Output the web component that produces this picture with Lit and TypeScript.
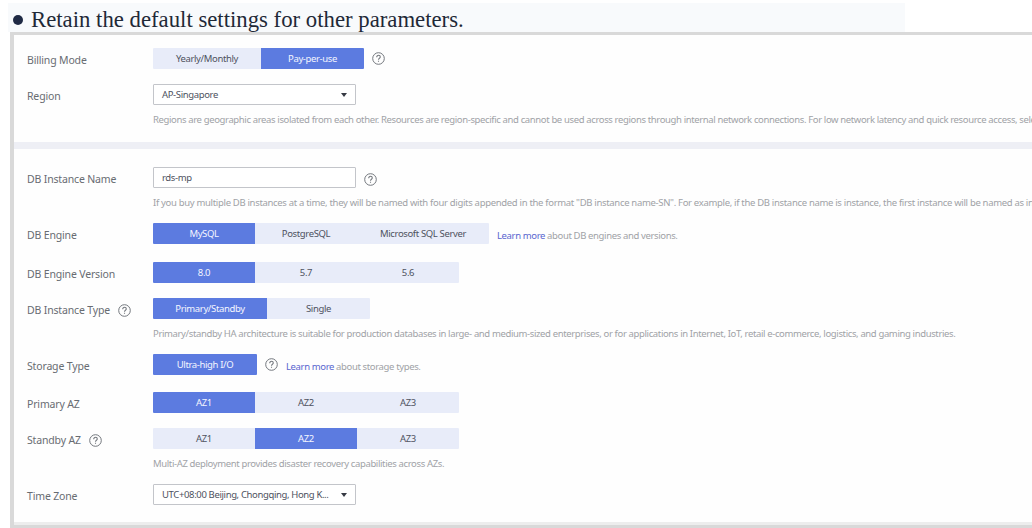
import { LitElement, html, css } from "lit";
import { customElement, property } from "lit/decorators.js";

@customElement("help-icon")
class HelpIcon extends LitElement {
  static styles = css`
    :host { display: block; width: 13px; height: 13px; flex: none; }
    svg { display: block; }
  `;
  render() {
    return html`<svg width="13" height="13" viewBox="0 0 13 13" fill="none" stroke="#73777d">
      <circle cx="6.5" cy="6.5" r="5.8" stroke-width="1"></circle>
      <path d="M4.7 5.2C4.7 4 5.5 3.3 6.5 3.3S8.3 4 8.3 5C8.3 6.3 6.5 6.2 6.5 7.7M6.5 8.8V9.8" stroke-width="1.1"></path>
    </svg>`;
  }
}

interface Option { text: string; width: number; }

@customElement("option-group")
class OptionGroup extends LitElement {
  @property({ attribute: false }) options: Option[] = [];
  @property({ type: Number }) selected = 0;
  static styles = css`
    :host { display: flex; height: 21px; border-radius: 1px; overflow: hidden; flex: none; }
    .option { background: #e8ecf9; color: #4e5260; display: flex; align-items: center; justify-content: center; line-height: 21px; white-space: nowrap; }
    .on { background: #5c7be0; color: #f4f6ff; }
  `;
  render() {
    return this.options.map((o, i) => html`<div class="option ${i === this.selected ? "on" : ""}" style="width:${o.width}px"><span>${o.text}</span></div>`);
  }
}

@customElement("app-root")
class AppRoot extends LitElement {
  static styles = css`
    :host { display: block; width: 1032px; height: 528px; overflow: hidden; background: #fff; font-family: "Noto Sans", sans-serif; font-size: 9.5px; letter-spacing: -0.365px; color: #4e5260; box-sizing: border-box; padding-top: 3px; }
    .heading { margin-left: 8px; width: 897px; height: 29px; background: #f8fafc; color: #1f2937; font: 22.75px/33px "Liberation Serif", serif; letter-spacing: 0; display: flex; align-items: center; box-sizing: border-box; padding: 4px 0 0 5px; }
    .bullet { width: 10px; height: 10px; border-radius: 50%; background: #1f2a44; margin-right: 8px; margin-top: 1px; }
    .panel { margin-left: 10px; height: 496px; box-sizing: border-box; border: 4px solid #d9d9d9; border-right: 0; border-top-width: 3px; border-bottom-width: 3px; background: #fefefe; display: flex; flex-direction: column; }
    .section { padding: 13px 0 0 13px; box-sizing: border-box; }
    .first { padding-top: 13px; height: 107px; }
    .second { padding-top: 18px; height: 373px; }
    .divider { height: 7px; background: #eeeff5; flex: none; }
    .base { height: 3px; background: #ededed; flex: none; }
    .row { display: grid; grid-template-columns: 126px 1fr; height: 21px; margin-bottom: 15px; }
    .label { display: flex; align-items: center; gap: 8px; font-size: 10.5px; letter-spacing: -0.16px; line-height: 22px; padding-top: 3px; color: #686c72; white-space: nowrap; }
    .control { display: flex; align-items: center; gap: 8px; white-space: nowrap; }
    .box { width: 203px; height: 21px; box-sizing: border-box; border: 1px solid #c3c5ca; border-radius: 1px; display: flex; align-items: center; justify-content: space-between; padding: 0 8px; background: #fff; }
    .hint { margin: -6px 0 11px 126px; height: 15px; line-height: 15px; white-space: nowrap; }
    .naming { letter-spacing: -0.315px; }
    .hint, .note { color: #a0a2a6; }
    .note { padding-top: 3px; }
    .link { color: #5965cf; }
    .arrow { width: 0; height: 0; border: 3px solid transparent; border-top: 4px solid #363a44; border-bottom: 0; margin-top: 1px; }
    .first { padding-top: 11px; }
    .second { padding-top: 16px; }
    .engine { margin-bottom: 18px; }
    .storage { margin-bottom: 17px; }
    .name help-icon { margin-top: 3px; }
  `;
  private row(label: string, control: unknown, help = false, variant = "") {
    return html`<div class="row ${variant}"><div class="label"><span>${label}</span>${help ? html`<help-icon></help-icon>` : ""}</div><div class="control">${control}</div></div>`;
  }
  private group(names: string[], widths: number[], selected = 0) {
    return html`<option-group .options=${names.map((text, i) => ({ text, width: widths[i] }))} .selected=${selected}></option-group>`;
  }
  render() {
    return html`
      <div class="heading"><div class="bullet"></div><span>Retain the default settings for other parameters.</span></div>
      <div class="panel">
        <div class="section first">
          ${this.row("Billing Mode", html`${this.group(["Yearly/Monthly", "Pay-per-use"], [108, 103], 1)}<help-icon></help-icon>`)}
          ${this.row("Region", html`<div class="box"><span>AP-Singapore</span><i class="arrow"></i></div>`)}
          <div class="hint">Regions are geographic areas isolated from each other. Resources are region-specific and cannot be used across regions through internal network connections. For low network latency and quick resource access, sele</div>
        </div>
        <div class="divider"></div>
        <div class="section second">
          ${this.row("DB Instance Name", html`<div class="box"><span>rds-mp</span></div><help-icon></help-icon>`, false, "name")}
          <div class="hint naming">If you buy multiple DB instances at a time, they will be named with four digits appended in the format "DB instance name-SN". For example, if the DB instance name is instance, the first instance will be named as in</div>
          ${this.row("DB Engine", html`${this.group(["MySQL", "PostgreSQL", "Microsoft SQL Server"], [102, 102, 132])}<div class="note"><span class="link">Learn more</span> about DB engines and versions.</div>`, false, "engine")}
          ${this.row("DB Engine Version", this.group(["8.0", "5.7", "5.6"], [102, 102, 102]))}
          ${this.row("DB Instance Type", this.group(["Primary/Standby", "Single"], [114, 103]), true)}
          <div class="hint">Primary/standby HA architecture is suitable for production databases in large- and medium-sized enterprises, or for applications in Internet, IoT, retail e-commerce, logistics, and gaming industries.</div>
          ${this.row("Storage Type", html`${this.group(["Ultra-high I/O"], [104])}<help-icon></help-icon><div class="note"><span class="link">Learn more</span> about storage types.</div>`, false, "storage")}
          ${this.row("Primary AZ", this.group(["AZ1", "AZ2", "AZ3"], [102, 102, 102]))}
          ${this.row("Standby AZ", this.group(["AZ1", "AZ2", "AZ3"], [102, 102, 102], 1), true)}
          <div class="hint">Multi-AZ deployment provides disaster recovery capabilities across AZs.</div>
          ${this.row("Time Zone", html`<div class="box"><span>UTC+08:00 Beijing, Chongqing, Hong K...</span><i class="arrow"></i></div>`)}
        </div>
        <div class="base"></div>
      </div>`;
  }
}
